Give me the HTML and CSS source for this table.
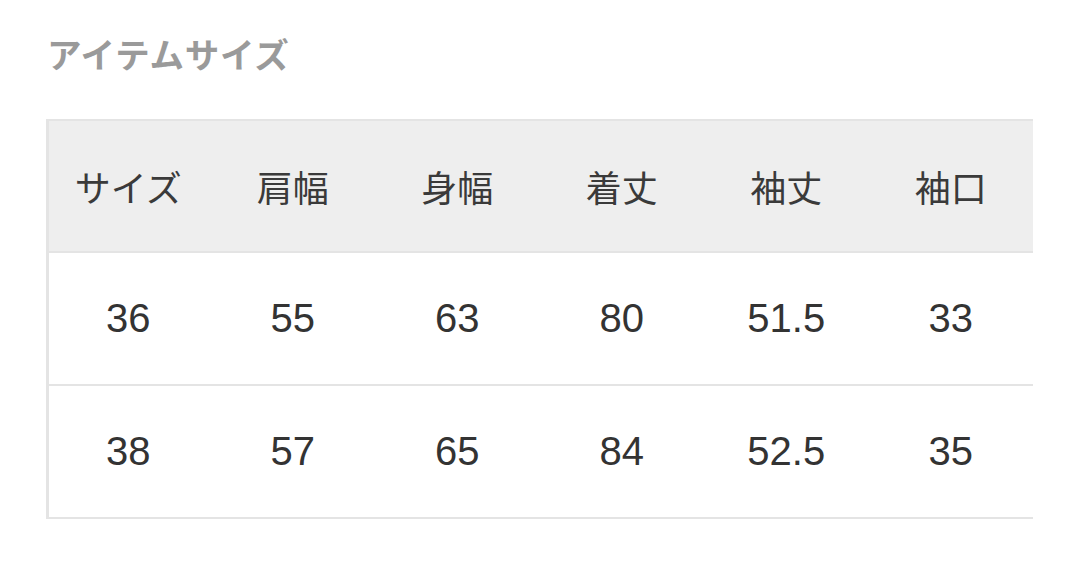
FILE: index.html
```html
<!DOCTYPE html>
<html lang="ja">
<head>
<meta charset="utf-8">
<link rel="stylesheet" href="styles.css">
</head>
<body>
<div class="page">
  <h2 class="title">アイテムサイズ</h2>
  <div class="size-table">
    <div class="row head">
      <div class="cell">サイズ</div>
      <div class="cell">肩幅</div>
      <div class="cell">身幅</div>
      <div class="cell">着丈</div>
      <div class="cell">袖丈</div>
      <div class="cell">袖口</div>
    </div>
    <div class="row">
      <div class="cell">36</div>
      <div class="cell">55</div>
      <div class="cell">63</div>
      <div class="cell">80</div>
      <div class="cell">51.5</div>
      <div class="cell">33</div>
    </div>
    <div class="row">
      <div class="cell">38</div>
      <div class="cell">57</div>
      <div class="cell">65</div>
      <div class="cell">84</div>
      <div class="cell">52.5</div>
      <div class="cell">35</div>
    </div>
  </div>
</div>
</body>
</html>
```

FILE: styles.css
```css
html, body {
  margin: 0;
  padding: 0;
  background: #ffffff;
}
.page {
  padding: 36px 0 0 46px;
  font-family: "Liberation Sans", "Noto Sans CJK JP", sans-serif;
}
.title {
  margin: 0 0 48px 1px;
  font-family: "Noto Sans CJK JP", sans-serif;
  font-size: 34.5px;
  line-height: 35px;
  font-weight: 700;
  color: #9a9a9a;
  letter-spacing: 0.8px;
}
.size-table {
  width: 987px;
  border-top: 2px solid #e4e4e4;
  box-shadow: inset 3px 0 0 #e4e4e4;
}
.row {
  display: grid;
  grid-template-columns: repeat(6, 1fr);
  height: 131px;
  border-bottom: 2px solid #e4e4e4;
}
.row.head {
  height: 130px;
  background: #eeeeee;
  box-shadow: inset 3px 0 0 #e4e4e4;
}
.cell {
  display: flex;
  align-items: center;
  justify-content: center;
  font-size: 40px;
  color: #333333;
}
.head .cell {
  font-family: "Noto Sans CJK JP", sans-serif;
  font-size: 36px;
  color: #3a3a3a;
}
```
